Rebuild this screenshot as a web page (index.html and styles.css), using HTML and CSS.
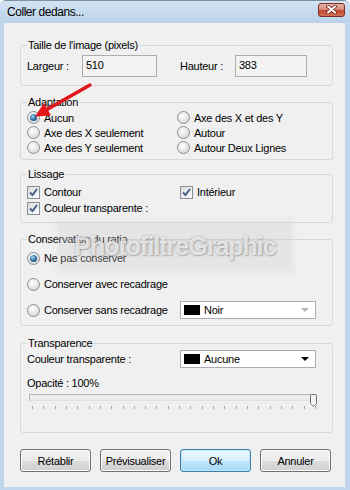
FILE: index.html
```html
<!DOCTYPE html>
<html lang="fr">
  <head>
    <meta charset="UTF-8" />
    <title>Coller dedans...</title>
    <link rel="stylesheet" href="styles.css">
  </head>
  <body>
    <div class="window">
      <div class="titlebar">
        <span class="title">Coller dedans...</span>
        <span class="close">
          <svg width="11" height="9" viewBox="0 0 11 9">
            <path d="M2 1.5 L9 7.5 M9 1.5 L2 7.5" stroke="#6a2216" stroke-width="3.6" stroke-linecap="round" />
            <path d="M2 1.5 L9 7.5 M9 1.5 L2 7.5" stroke="#fff" stroke-width="2" stroke-linecap="round" />
          </svg>
        </span>
      </div>

      <div class="client">
        <fieldset class="group g-size">
          <legend>Taille de l'image (pixels)</legend>
          <div class="size-row">
            <span class="lbl">Largeur :</span>
            <span class="field w1">510</span>
            <span class="lbl lbl2">Hauteur :</span>
            <span class="field w2">383</span>
          </div>
        </fieldset>

        <fieldset class="group g-fit">
          <legend>Adaptation</legend>
          <div class="grid2">
            <label class="opt"><span class="radio on"></span>Aucun</label>
            <label class="opt"><span class="radio"></span>Axe des X et des Y</label>
            <label class="opt"><span class="radio"></span>Axe des X seulement</label>
            <label class="opt"><span class="radio"></span>Autour</label>
            <label class="opt"><span class="radio"></span>Axe des Y seulement</label>
            <label class="opt"><span class="radio"></span>Autour Deux Lignes</label>
          </div>
        </fieldset>

        <fieldset class="group g-smooth">
          <legend>Lissage</legend>
          <div class="grid2 wide">
            <label class="opt tall"><span class="check"><svg width="11" height="11" viewBox="0 0 11 11"><path d="M2 5.5 L4.5 8 L9 2" fill="none" stroke="#4a5d86" stroke-width="2" /></svg></span>Contour</label>
            <label class="opt tall"><span class="check"><svg width="11" height="11" viewBox="0 0 11 11"><path d="M2 5.5 L4.5 8 L9 2" fill="none" stroke="#4a5d86" stroke-width="2" /></svg></span>Intérieur</label>
            <label class="opt tall"><span class="check"><svg width="11" height="11" viewBox="0 0 11 11"><path d="M2 5.5 L4.5 8 L9 2" fill="none" stroke="#4a5d86" stroke-width="2" /></svg></span>Couleur transparente :</label>
          </div>
        </fieldset>

        <fieldset class="group g-ratio">
          <legend>Conservation du ratio</legend>
          <div class="ratio-list">
            <label class="opt row22"><span class="radio on"></span>Ne pas conserver</label>
            <label class="opt row22"><span class="radio"></span>Conserver avec recadrage</label>
            <div class="row22 split">
              <label class="opt col1"><span class="radio"></span>Conserver sans recadrage</label>
              <div class="combo">
                <span class="swatch"></span>
                <span class="combo-text">Noir</span>
                <span class="arrow dim"></span>
              </div>
            </div>
          </div>
        </fieldset>

        <fieldset class="group g-transp">
          <legend>Transparence</legend>
          <div class="split">
            <span class="col1 lbl-plain">Couleur transparente :</span>
            <div class="combo">
              <span class="swatch"></span>
              <span class="combo-text">Aucune</span>
              <span class="arrow"></span>
            </div>
          </div>
          <div class="opacity">Opacité : 100%</div>
          <div class="slider">
            <div class="track"></div>
            <div class="ticks">
              <i></i><i></i><i></i><i></i><i></i><i></i><i></i><i></i><i></i><i></i><i></i><i></i><i></i>
              <i></i><i></i><i></i><i></i><i></i><i></i><i></i><i></i><i></i><i></i><i></i><i></i><i></i>
            </div>
            <svg class="thumb" width="7" height="13" viewBox="0 0 7 13">
              <path d="M0.5 1.5 Q0.5 0.5 1.5 0.5 L5.5 0.5 Q6.5 0.5 6.5 1.5 L6.5 9.5 L3.5 12.5 L0.5 9.5 Z" fill="#f4f4f4" stroke="#6f6f6f" />
            </svg>
          </div>
        </fieldset>

        <div class="buttons">
          <button type="button">Rétablir</button>
          <button type="button">Prévisualiser</button>
          <button type="button" class="default">Ok</button>
          <button type="button">Annuler</button>
        </div>
      </div>

      <div class="watermark">PhotofiltreGraphic</div>

      <svg class="pointer" width="350" height="490" viewBox="0 0 350 490">
        <line x1="90" y1="85" x2="47" y2="109.5" stroke="#e3161c" stroke-width="3.5" stroke-linecap="round" />
        <polygon points="35,116.5 51,115.5 44,103" fill="#e3161c" />
      </svg>
    </div>
  </body>
</html>
```

FILE: styles.css
```css
body {
  margin: 0;
  font-family: "Liberation Sans", Arial, sans-serif;
  font-size: 11px;
  letter-spacing: -0.25px;
  color: #000;
  background: #fff;
}
.window {
  position: relative;
  width: 350px;
  height: 490px;
  box-sizing: border-box;
  display: flex;
  flex-direction: column;
  background: #c0d6ec;
  border-top: 1px solid #7d8fa3;
  border-radius: 6px 6px 0 0;
  overflow: hidden;
}
.titlebar {
  height: 22px;
  flex: none;
  display: flex;
  align-items: center;
  justify-content: space-between;
  padding: 0 5px 0 7px;
  background: linear-gradient(#d3e3f3, #bad2ea);
}
.title {
  font-size: 12px;
  letter-spacing: -0.45px;
  margin-top: -1px;
}
.close {
  width: 25px;
  height: 12px;
  margin-top: -5px;
  display: flex;
  align-items: center;
  justify-content: center;
  border: 1px solid #7b2e22;
  border-radius: 3px;
  background: linear-gradient(#e7b2a5, #d88a78 45%, #c24a30 55%, #d0705a);
}
.client {
  flex: 1;
  margin: 0 5px 3px 4px;
  padding: 15px 12px 0 16px;
  background: #f0f0f0;
}
.group {
  margin: 0;
  padding: 0 6px;
  border: 1px solid #d5d9dc;
  border-radius: 3px;
  min-width: 0;
}
.group legend {
  padding: 0 1px;
  line-height: 14px;
}
.g-size {
  padding-top: 3px;
  padding-bottom: 8px;
}
.g-fit {
  margin-top: 9px;
  padding-top: 1px;
  padding-bottom: 4px;
}
.g-smooth {
  margin-top: 7px;
  padding-top: 3px;
  padding-bottom: 6px;
}
.g-ratio {
  margin-top: 9px;
  padding-top: 1px;
  padding-bottom: 4px;
}
.g-transp {
  margin-top: 10px;
  padding-top: 0;
  padding-bottom: 20px;
}
.size-row {
  display: flex;
  align-items: center;
  height: 22px;
}
.lbl {
  width: 55px;
}
.lbl2 {
  margin-left: 23px;
}
.field {
  height: 22px;
  box-sizing: border-box;
  border: 1px solid #adadad;
  background: #f3f3f3;
  padding: 2px 3px;
  line-height: 15px;
}
.w1 {
  width: 75px;
}
.w2 {
  width: 72px;
}
.grid2 {
  display: grid;
  grid-template-columns: 150px 1fr;
}
.grid2.wide {
  grid-template-columns: 153px 1fr;
}
.opt {
  display: flex;
  align-items: center;
  gap: 4px;
  height: 15px;
  white-space: nowrap;
}
.opt.tall {
  height: 16px;
}
.radio {
  width: 13px;
  height: 13px;
  box-sizing: border-box;
  border-radius: 50%;
  border: 1px solid #8c8f92;
  background: radial-gradient(circle at 40% 35%, #ffffff, #e4e4e4 55%, #c9c9c9);
  display: flex;
  align-items: center;
  justify-content: center;
  flex: none;
}
.radio.on::after {
  content: "";
  width: 7px;
  height: 7px;
  border-radius: 50%;
  background: radial-gradient(circle at 40% 35%, #9ad6f2, #2a6a98 55%, #123a5e);
}
.check {
  width: 13px;
  height: 13px;
  box-sizing: border-box;
  border: 1px solid #8c8f92;
  background: linear-gradient(135deg, #d9dde2, #fbfbfb);
  display: flex;
  align-items: center;
  justify-content: center;
  flex: none;
}
.ratio-list {
  display: flex;
  flex-direction: column;
  gap: 4px;
}
.row22 {
  height: 22px;
}
.split {
  display: flex;
  align-items: center;
}
.g-transp .split {
  height: 18px;
}
.split.row22 {
  height: 22px;
}
.col1 {
  width: 153px;
}
.combo {
  width: 136px;
  height: 18px;
  box-sizing: border-box;
  border: 1px solid #abadb3;
  background: #fff;
  display: flex;
  align-items: center;
  padding: 0 6px 0 3px;
}
.swatch {
  width: 16px;
  height: 10px;
  background: #000;
  flex: none;
}
.combo-text {
  flex: 1;
  margin-left: 4px;
}
.arrow {
  width: 0;
  height: 0;
  border-left: 4px solid transparent;
  border-right: 4px solid transparent;
  border-top: 4px solid #000;
}
.arrow.dim {
  border-top-color: #b5b5b5;
}
.opacity {
  margin-top: 8px;
  line-height: 14px;
}
.slider {
  position: relative;
  height: 18px;
  margin-top: 4px;
}
.track {
  margin: 2px 0 0 2px;
  width: 286px;
  height: 7px;
  box-sizing: border-box;
  border: 1px solid #b4b4b4;
  border-bottom-color: #e2e2e2;
  border-right-color: #e2e2e2;
  background: #ececec;
}
.ticks {
  display: flex;
  justify-content: space-between;
  width: 284px;
  margin: 5px 0 0 5px;
  height: 3px;
}
.ticks i {
  width: 1px;
  height: 3px;
  background: #a9a9a9;
}
.thumb {
  position: absolute;
  left: 283px;
  top: 0;
}
.buttons {
  display: flex;
  gap: 9px;
  margin-top: 16px;
}
button {
  width: 71px;
  height: 23px;
  padding: 0;
  font-family: "Liberation Sans", Arial, sans-serif;
  font-size: 11px;
  letter-spacing: -0.25px;
  color: #000;
  border: 1px solid #707070;
  border-radius: 3px;
  background: linear-gradient(#f2f2f2, #ebebeb 50%, #dddddd 51%, #cfcfcf);
  box-shadow: inset 0 0 0 1px #fcfcfc;
}
button.default {
  border-color: #3c7fb1;
  background: linear-gradient(#eaf6fd, #d9f0fc 50%, #bee6fd 51%, #a7d9f5);
  box-shadow: inset 0 0 0 1px #c4e5f6;
}
.watermark {
  position: absolute;
  left: 60px;
  top: 222px;
  width: 230px;
  height: 46px;
  display: flex;
  align-items: center;
  justify-content: center;
  background: rgba(205, 205, 205, 0.3);
  box-shadow: 0 0 6px 3px rgba(205, 205, 205, 0.3);
  font-size: 25px;
  font-weight: bold;
  letter-spacing: -1px;
  color: rgba(255, 255, 255, 0.7);
  text-shadow: 0 0 3px rgba(90, 90, 90, 0.45), 1px 1px 1px rgba(120, 120, 120, 0.35);
  pointer-events: none;
}
.pointer {
  position: absolute;
  left: 0;
  top: -1px;
  pointer-events: none;
}
```
